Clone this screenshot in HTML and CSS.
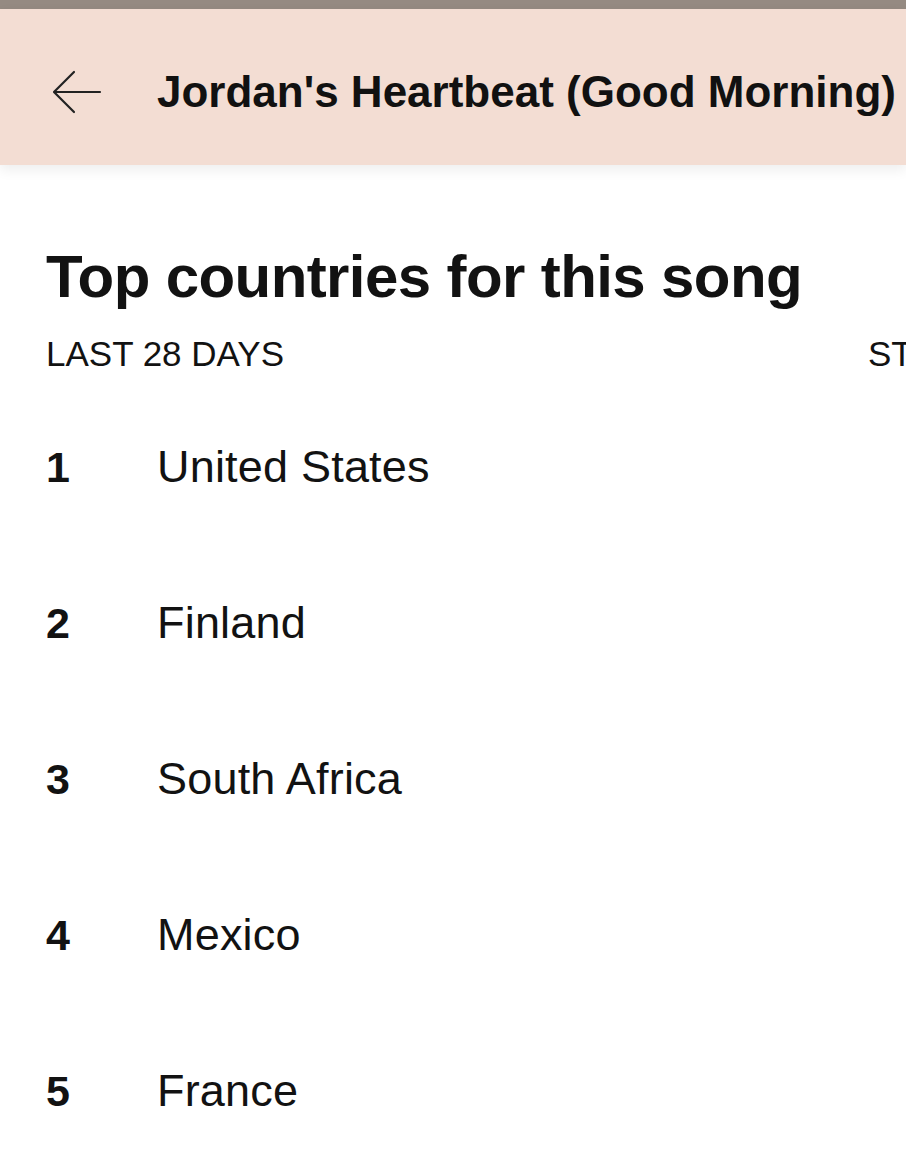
FILE: index.html
```html
<!DOCTYPE html>
<html lang="en">
<head>
  <meta charset="UTF-8" />
  <meta name="viewport" content="width=device-width, initial-scale=1.0"/>
  <title>Top countries</title>
  <link rel="stylesheet" href="styles.css">
</head>
<body>

  <div class="status-bar"></div>

  <header class="top-bar">
    <button class="back-btn" aria-label="Back">
      <svg width="50" height="44" viewBox="0 0 50 44" fill="none" stroke="#222" stroke-width="2.2" stroke-linecap="round" stroke-linejoin="round">
        <path d="M48 22H3"/>
        <path d="M22 2L2 22l20 20"/>
      </svg>
    </button>
    <h2 class="song-title">Jordan's Heartbeat (Good Morning)</h2>
  </header>

  <main class="content">
    <h1>Top countries for this song</h1>

    <div class="list-head">
      <span>LAST 28 DAYS</span>
      <span>STREAMS</span>
    </div>

    <!-- country ranking -->
    <ol class="ranking">
      <li><span class="rank">1</span><span class="country">United States</span></li>
      <li><span class="rank">2</span><span class="country">Finland</span></li>
      <li><span class="rank">3</span><span class="country">South Africa</span></li>
      <li><span class="rank">4</span><span class="country">Mexico</span></li>
      <li><span class="rank">5</span><span class="country">France</span></li>
    </ol>
  </main>

</body>
</html>
```

FILE: styles.css
```css
body {
  font-family: "Liberation Sans", Arial, sans-serif;
  margin: 0;
  background-color: white;
  color: #121212;
  overflow: hidden;
}

.status-bar {
  height: 9px;
  background-color: #958a82;
}

.top-bar {
  height: 156px;
  box-sizing: border-box;
  padding-top: 10px;
  background-color: #f3ddd3;
  display: flex;
  align-items: center;
  padding-left: 52px;
  box-shadow: 0 5px 12px rgba(0, 0, 0, 0.07);
  position: relative;
}

.back-btn {
  background: none;
  border: none;
  padding: 0;
  margin-right: 55px;
  display: flex;
  cursor: pointer;
}

.song-title {
  margin: 0;
  font-size: 44px;
  font-weight: bold;
  white-space: nowrap;
  color: #111;
}

.content {
  padding-left: 46px;
}

.content h1 {
  margin: 77px 0 0;
  font-size: 60px;
  line-height: 69px;
  letter-spacing: -0.6px;
  white-space: nowrap;
}

.list-head {
  display: grid;
  grid-template-columns: 822px auto;
  margin-top: 23px;
  font-size: 35px;
  line-height: 40px;
  white-space: nowrap;
}

.ranking {
  list-style: none;
  margin: 15px 0 0;
  padding: 0;
}

.ranking li {
  display: flex;
  height: 156px;
  line-height: 156px;
  font-size: 45px;
}

.rank {
  width: 111px;
  font-weight: bold;
  font-size: 43px;
}

.country {
  letter-spacing: 0.2px;
}
```
